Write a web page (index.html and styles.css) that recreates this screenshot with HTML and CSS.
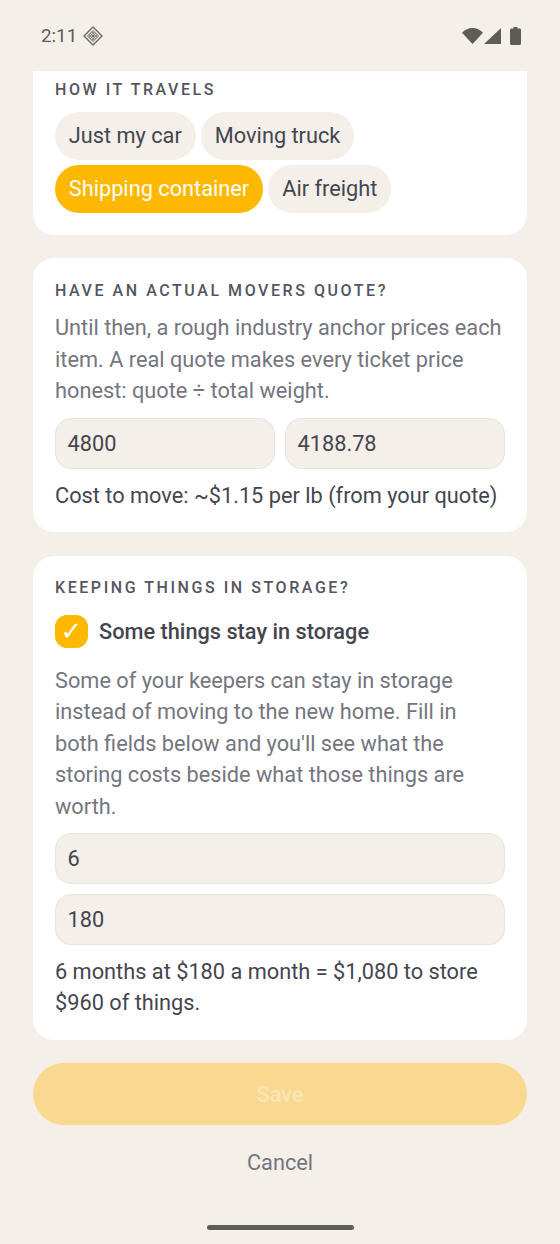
FILE: index.html
```html
<!DOCTYPE html>
<html lang="en">
<head>
<meta charset="utf-8">
<title>Move details</title>
<link rel="stylesheet" href="styles.css">
</head>
<body>
<div class="screen">
  <header class="status">
    <div class="status-left">
      <span class="time">2:11</span>
      <svg class="notif" viewBox="0 0 20 20" width="20" height="20" aria-hidden="true">
        <path d="M10 1 19 10 10 19 1 10Z" fill="none" stroke="#6a675f" stroke-width="1.4" stroke-linejoin="round"/>
        <path d="M10 4.500 15.500 10 10 15.500 4.500 10Z M7.250 7.250 12.750 12.750 M12.750 7.250 7.250 12.750 M5.900 8.600 11.400 14.100 M8.600 5.900 14.100 11.400 M14.100 8.600 8.600 14.100 M11.400 5.900 5.900 11.400" fill="none" stroke="#6a675f" stroke-width="1"/>
      </svg>
    </div>
    <div class="status-right">
      <svg viewBox="0 0 21 16" width="21" height="16" aria-hidden="true"><path d="M10.500 16 0 4.700C2.800 1.800 6.400 0 10.500 0s7.700 1.800 10.500 4.700Z" fill="#5f5c56"/></svg>
      <svg viewBox="0 0 17 16" width="17" height="16" aria-hidden="true"><path d="M0 16 17 0v16Z" fill="#5f5c56"/></svg>
      <svg class="batt" viewBox="0 0 11 18" width="11" height="18" aria-hidden="true"><path d="M3.500 0h4v1.500h2c.8 0 1.500.7 1.500 1.500v13.500c0 .8-.7 1.500-1.500 1.500h-8C.7 18 0 17.300 0 16.500V3c0-.8.700-1.500 1.500-1.500h2Z" fill="#5f5c56"/></svg>
    </div>
  </header>

  <main class="content">
    <section class="card card-clipped">
      <h2 class="label">HOW IT TRAVELS</h2>
      <div class="chips">
        <span class="chip">Just my car</span>
        <span class="chip">Moving truck</span>
        <span class="chip chip-on">Shipping container</span>
        <span class="chip">Air freight</span>
      </div>
    </section>

    <section class="card">
      <h2 class="label">HAVE AN ACTUAL MOVERS QUOTE?</h2>
      <p class="muted">Until then, a rough industry anchor prices each item. A real quote makes every ticket price honest: quote ÷ total weight.</p>
      <div class="field-row">
        <div class="field">4800</div>
        <div class="field">4188.78</div>
      </div>
      <p class="result">Cost to move: ~$1.15 per lb (from your quote)</p>
    </section>

    <section class="card">
      <h2 class="label">KEEPING THINGS IN STORAGE?</h2>
      <div class="check-row">
        <span class="check">✓</span>
        <span class="check-label">Some things stay in storage</span>
      </div>
      <p class="muted muted-after-check">Some of your keepers can stay in storage instead of moving to the new home. Fill in both fields below and you'll see what the storing costs beside what those things are worth.</p>
      <div class="field-stack">
        <div class="field">6</div>
        <div class="field">180</div>
      </div>
      <p class="result">6 months at $180 a month = $1,080 to store $960 of things.</p>
    </section>

    <button class="save" type="button"><span>Save</span></button>
    <div class="cancel">Cancel</div>
  </main>

  <div class="home-bar"><span></span></div>
</div>
</body>
</html>
```
FILE: styles.css
```css
* { box-sizing: border-box; }
html, body { margin: 0; padding: 0; }
body {
  background: #f4efe9;
  font-family: Roboto, "Noto Sans", sans-serif;
  color: #45454f;
}
.screen {
  width: 560px;
  height: 1244px;
  display: flex;
  flex-direction: column;
  overflow: hidden;
}
.status {
  height: 71px;
  flex: none;
  display: flex;
  justify-content: space-between;
  align-items: flex-start;
  padding: 25px 39px 0 41px;
}
.status-left { display: flex; align-items: center; gap: 6px; height: 21px; }
.time { font-size: 18.800px; line-height: 21px; padding-top: 1px; color: #5f5c56; }
.notif { display: block; }
.status-right { display: flex; align-items: center; gap: 1px; height: 21px; }
.status-right svg { display: block; }
.status-right .batt { margin-left: 8px; }

.content {
  flex: 1;
  display: flex;
  flex-direction: column;
  padding: 0 33px;
}
.card {
  background: #fff;
  border-radius: 21px;
  padding: 23.500px 22px 21px;
  margin-bottom: 23.500px;
}
.card-clipped {
  border-radius: 0 0 21px 21px;
  padding-top: 10px;
  height: 163.500px;
}
.label {
  margin: 0;
  font-size: 16px;
  line-height: 18px;
  font-weight: 500;
  letter-spacing: 2.560px;
  color: #55555f;
}
.chips {
  display: flex;
  flex-wrap: wrap;
  gap: 5px 5.500px;
  margin-top: 13px;
  width: 400px;
}
.chip {
  height: 48px;
  padding: 0 13.750px;
  border-radius: 24px;
  background: #f4efe9;
  font-size: 21.750px;
  line-height: 48px;
  color: #45454f;
}
.chip-on { background: #ffb800; color: #fff; }
.muted {
  margin: 12.500px 0 0;
  font-size: 21.750px;
  line-height: 31.500px;
  color: #75757f;
}
.muted-after-check { margin-top: 17px; }
.field-row { display: flex; gap: 10px; margin-top: 11px; }
.field-row .field { flex: 1; }
.field-stack { display: flex; flex-direction: column; gap: 10px; margin-top: 10.500px; }
.field {
  height: 51px;
  padding: 0 11.500px;
  border: 1.500px solid #e6e4e3;
  border-radius: 16px;
  background: #f4efe9;
  font-size: 21.750px;
  line-height: 49px;
  color: #45454f;
}
.result {
  margin: 11px 0 0;
  font-size: 21.750px;
  line-height: 31.500px;
  color: #45454f;
}
.check-row { display: flex; align-items: center; gap: 11px; margin-top: 17.500px; }
.check {
  width: 33px;
  height: 33px;
  border-radius: 12px;
  background: #ffb800;
  color: #fff;
  font-family: "DejaVu Sans", sans-serif;
  font-size: 26px;
  font-weight: 700;
  line-height: 33px;
  text-align: center;
}
.check-label { font-size: 21.750px; font-weight: 500; line-height: 33px; color: #45454f; }
.save {
  height: 62px;
  flex: none;
  border: 0;
  border-radius: 31px;
  background: #f9d88f;
  font-family: inherit;
  font-size: 21.750px;
  font-weight: 500;
  color: #fbe5b6;
  padding: 0;
}
.cancel {
  text-align: center;
  margin-top: 21.500px;
  font-size: 21.750px;
  line-height: 32px;
  color: #75757f;
}
.home-bar {
  flex: none;
  height: 19px;
  padding-bottom: 14px;
  display: flex;
  justify-content: center;
}
.home-bar span { width: 147px; height: 5px; border-radius: 3px; background: #5f5c56; }
```
